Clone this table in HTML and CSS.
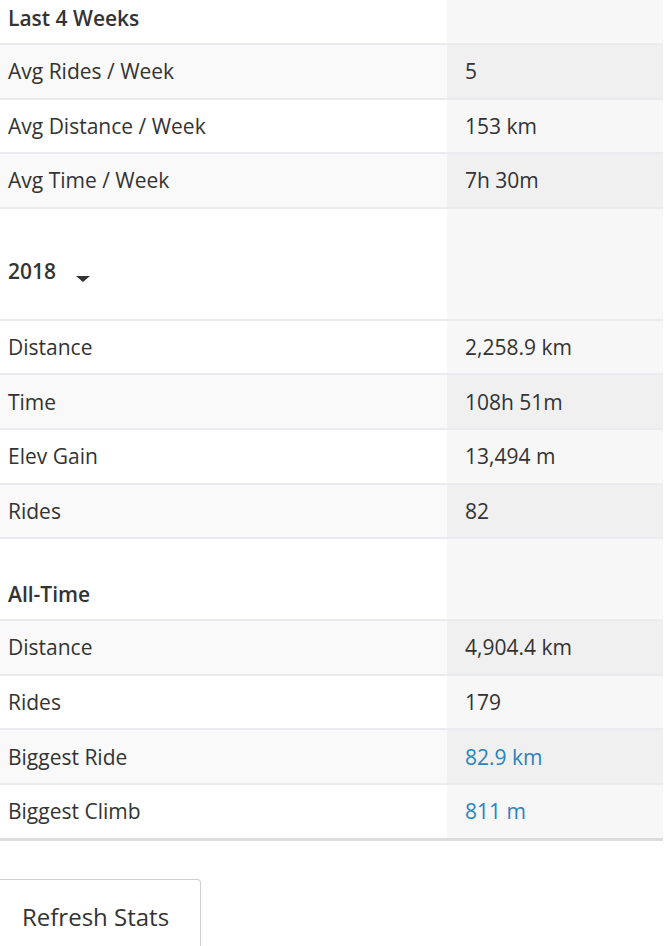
FILE: index.html
```html
<!DOCTYPE html>
<html lang="en">
<head>
  <meta charset="UTF-8">
  <meta name="viewport" content="width=device-width, initial-scale=1.0">
  <title>Ride Stats</title>
  <link rel="stylesheet" href="styles.css">
</head>
<body>
  <table class="stats">
    <tbody>
      <tr class="section first">
        <th>Last 4 Weeks</th>
        <td class="value"></td>
      </tr>
      <tr class="odd">
        <td>Avg Rides / Week</td>
        <td class="value">5</td>
      </tr>
      <tr>
        <td>Avg Distance / Week</td>
        <td class="value">153 km</td>
      </tr>
      <tr class="odd">
        <td>Avg Time / Week</td>
        <td class="value">7h 30m</td>
      </tr>

      <tr class="section year">
        <th>
          <span class="year-select">2018 <span class="caret"></span></span>
        </th>
        <td class="value"></td>
      </tr>
      <tr>
        <td>Distance</td>
        <td class="value">2,258.9 km</td>
      </tr>
      <tr class="odd">
        <td>Time</td>
        <td class="value">108h 51m</td>
      </tr>
      <tr>
        <td>Elev Gain</td>
        <td class="value">13,494 m</td>
      </tr>
      <tr class="odd">
        <td>Rides</td>
        <td class="value">82</td>
      </tr>

      <tr class="section">
        <th>All-Time</th>
        <td class="value"></td>
      </tr>
      <tr class="odd">
        <td>Distance</td>
        <td class="value">4,904.4 km</td>
      </tr>
      <tr>
        <td>Rides</td>
        <td class="value">179</td>
      </tr>
      <tr class="odd">
        <td>Biggest Ride</td>
        <td class="value"><a href="#">82.9 km</a></td>
      </tr>
      <tr class="last">
        <td>Biggest Climb</td>
        <td class="value"><a href="#">811 m</a></td>
      </tr>
    </tbody>
  </table>

  <button class="refresh">Refresh Stats</button>
</body>
</html>
```

FILE: styles.css
```css
body {
  margin: 0;
  font-family: "Open Sans", "Noto Sans", sans-serif;
  color: #333;
  background: #fff;
}
.stats {
  width: 663px;
  border-collapse: collapse;
  font-size: 21px;
}
.stats th,
.stats td {
  height: 52.6px;
  padding: 0 8px;
  text-align: left;
  border-bottom: 2px solid #ebebef;
}
.stats th {
  font-weight: 600;
  vertical-align: bottom;
  padding-bottom: 11px;
  height: 69px;
}
.stats .first th,
.stats .first td {
  height: 32px;
  padding-bottom: 11px;
}
.stats .year th,
.stats .year td {
  height: 76px;
  padding-bottom: 34px;
}
.stats td:first-child {
  width: 431px;
}
.stats .value {
  padding-left: 18px;
  background: #f7f7f7;
}
.stats .odd td {
  background: #f9f9f9;
}
.stats .odd .value {
  background: #f0f0f0;
}
.stats .last td {
  border-bottom: 3px solid #dcdcdc;
}
.stats a {
  color: #2b83bd;
  text-decoration: none;
}
.year-select {
  display: inline-flex;
  align-items: center;
  gap: 20px;
}
.caret {
  width: 0;
  height: 0;
  margin-top: 16px;
  border-left: 7px solid transparent;
  border-right: 7px solid transparent;
  border-top: 6px solid #333;
}
.refresh {
  display: block;
  width: 201px;
  margin-top: 38px;
  padding: 20px 0 30px 22px;
  font-family: inherit;
  font-size: 24px;
  text-align: left;
  color: #333;
  background: #fff;
  border: 1px solid #cfcfcf;
  border-left: none;
  border-radius: 0 4px 0 0;
  cursor: pointer;
}
```
